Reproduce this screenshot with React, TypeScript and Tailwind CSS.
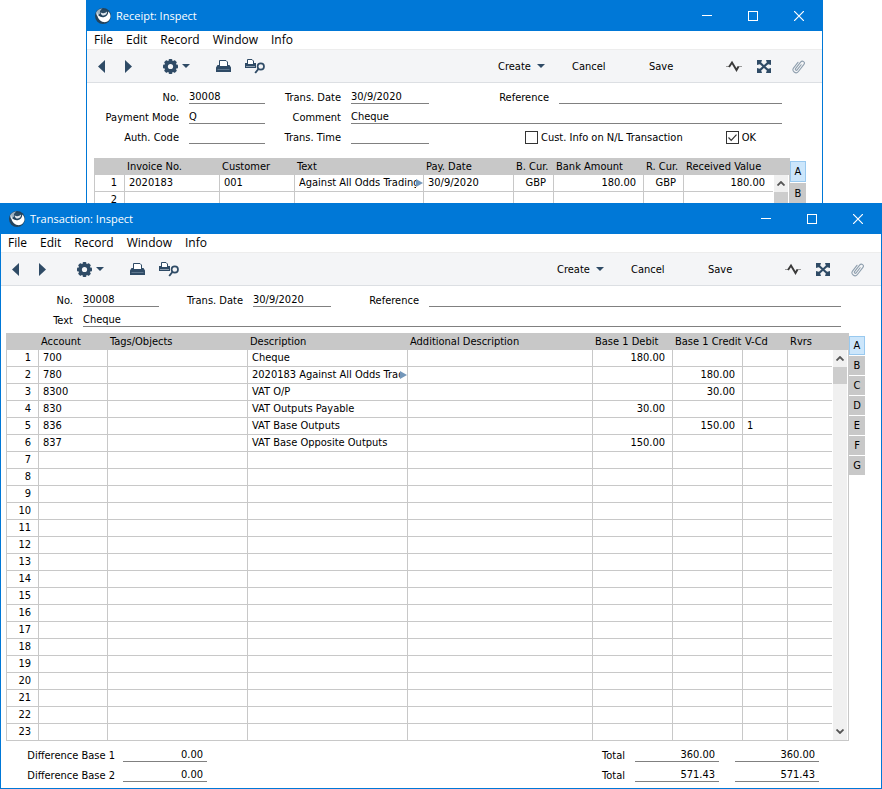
import type { ReactNode } from 'react'
import clsx from 'clsx'

type Column = {
  title: string
  width?: string
  align?: 'right'
}

type Cell = string | { text: string; more: true }

const receiptColumns: Column[] = [
  { title: '', width: 'w-[31px]', align: 'right' },
  { title: 'Invoice No.', width: 'w-[95px]' },
  { title: 'Customer', width: 'w-[75px]' },
  { title: 'Text' },
  { title: 'Pay. Date', width: 'w-[90px]' },
  { title: 'B. Cur.', width: 'w-[40px]', align: 'right' },
  { title: 'Bank Amount', width: 'w-[90px]', align: 'right' },
  { title: 'R. Cur.', width: 'w-[40px]', align: 'right' },
  { title: 'Received Value', width: 'w-[89px]', align: 'right' },
]

const receiptRows: Cell[][] = [
  ['2020183', '001', { text: 'Against All Odds Trading', more: true }, '30/9/2020', 'GBP', '180.00', 'GBP', '180.00'],
]

const transactionColumns: Column[] = [
  { title: '', width: 'w-[33px]', align: 'right' },
  { title: 'Account', width: 'w-[69px]' },
  { title: 'Tags/Objects', width: 'w-[140px]' },
  { title: 'Description', width: 'w-[160px]' },
  { title: 'Additional Description' },
  { title: 'Base 1 Debit', width: 'w-[80px]', align: 'right' },
  { title: 'Base 1 Credit', width: 'w-[70px]', align: 'right' },
  { title: 'V-Cd', width: 'w-[45px]' },
  { title: 'Rvrs', width: 'w-[44px]' },
]

const transactionRows: Cell[][] = [
  ['700', '', 'Cheque', '', '180.00'],
  ['780', '', { text: '2020183 Against All Odds Trad', more: true }, '', '', '180.00'],
  ['8300', '', 'VAT O/P', '', '', '30.00'],
  ['830', '', 'VAT Outputs Payable', '', '30.00'],
  ['836', '', 'VAT Base Outputs', '', '', '150.00', '1'],
  ['837', '', 'VAT Base Opposite Outputs', '', '150.00'],
]

function Logo() {
  return (
    <svg className="h-4 w-4" viewBox="0 0 16 16" aria-hidden="true">
      <circle cx="8" cy="8" r="8" fill="#23435c" />
      <path d="M1 4.500C2.400 1.800 5 .5 7.500.5 5.500 1.800 4.600 3.500 5 5.500L2.500 8C1.300 7 .8 5.800 1 4.500Z" fill="#9fb2c1" />
      <path d="M2 3.800c.2 3.700 3.200 5.900 6.600 5.400 3-.5 4.800-2.700 4.700-5.700 1.500 1.300 2.200 3 2.200 4.700 0 3.600-3.200 6.300-6.800 5.900C4.800 13.600 1.500 9.200 2 3.800Z" fill="#fff" />
      <path d="M5 3.500C6.400 1.600 10 1 12.300 3c.3 2.700-1.300 4.700-3.700 4.900C6.500 8 4.800 6 5 3.500Z" fill="#2b4b64" />
      <path d="M5.600 4.200c1.700 1.500 4.300 1.300 6.500-.6.100 2.200-1.300 3.800-3.300 4-1.700.1-3-1.300-3.200-3.400Z" fill="#dfe7ed" />
    </svg>
  )
}

function Triangle({ dir }: { dir: 'left' | 'right' }) {
  return (
    <svg className="h-[13px] w-[7px] fill-current" viewBox="0 0 7 13" aria-hidden="true">
      {dir === 'left' ? <path d="M7 0v13L0 6.500Z" /> : <path d="M0 0v13l7-6.500Z" />}
    </svg>
  )
}

function Caret() {
  return (
    <svg className="h-1 w-2 fill-current" viewBox="0 0 8 4" aria-hidden="true">
      <path d="M0 0h8L4 4Z" />
    </svg>
  )
}

function Gear() {
  return (
    <svg className="h-[15px] w-[15px]" viewBox="0 0 15 15" aria-hidden="true">
      <g fill="currentColor">
        <rect x="5.600" y="0" width="3.800" height="15" rx="1" />
        <rect x="5.600" y="0" width="3.800" height="15" rx="1" transform="rotate(45 7.500 7.500)" />
        <rect x="5.600" y="0" width="3.800" height="15" rx="1" transform="rotate(90 7.500 7.500)" />
        <rect x="5.600" y="0" width="3.800" height="15" rx="1" transform="rotate(135 7.500 7.500)" />
        <circle cx="7.500" cy="7.500" r="6" />
      </g>
      <circle cx="7.500" cy="7.500" r="2.600" fill="#f4f5f7" />
    </svg>
  )
}

function Printer() {
  return (
    <svg className="h-3 w-[15px]" viewBox="0 0 15 12" aria-hidden="true">
      <path d="M3.500 7V.5h6.500l1.500 1.500v5" fill="#fff" stroke="currentColor" strokeWidth="1" />
      <path d="M1.500 5H3v1h9V5h1.500L15 7.500V12H0V7.500Z" fill="currentColor" />
      <path d="M1.500 9.500h12" stroke="#5f7890" strokeWidth="1" />
    </svg>
  )
}

function PrintPreview() {
  return (
    <svg className="h-[15px] w-5" viewBox="0 0 20 15" aria-hidden="true">
      <path d="M2.500 5V.5h4.500l1.500 1.500v3" fill="#fff" stroke="currentColor" strokeWidth="1" />
      <path d="M0 4h2v1h7V4h2v5H0Z" fill="currentColor" />
      <path d="M1 7.500h9" stroke="#8b9cae" strokeWidth="1" />
      <circle cx="15.800" cy="7.500" r="3.200" fill="none" stroke="currentColor" strokeWidth="1.700" />
      <path d="m13.400 10-3.200 4" stroke="currentColor" strokeWidth="1.900" />
    </svg>
  )
}

function Pulse() {
  return (
    <svg className="h-3 w-4" viewBox="0 0 16 12" fill="none" aria-hidden="true">
      <path d="M0 6.500h4M12 6.500h4" stroke="#9a9a9a" strokeWidth="1" />
      <path d="M3 7 6 2.500l4.500 7.500L12.500 6.500" stroke="#3a3a3a" strokeWidth="1.900" />
    </svg>
  )
}

function Expand() {
  return (
    <svg className="h-[13px] w-[14px]" viewBox="0 0 14 13" aria-hidden="true">
      <path d="M2 2l10 9M12 2 2 11" stroke="currentColor" strokeWidth="2.200" />
      <path d="M0 0h5L4 3 3.500 4 0 5ZM14 0v5l-3.500-1L10 3 9 0ZM0 13V8l3.500 1L4 10l1 3ZM14 13H9l1-3 .5-1L14 8Z" fill="currentColor" />
    </svg>
  )
}

function Clip() {
  return (
    <svg className="h-[15px] w-[13px]" viewBox="0 0 13 15" fill="none" aria-hidden="true">
      <path
        d="M-3-3V4a3 3 0 0 0 6 0V-5a2 2 0 0 0-4 0V3.500a1 1 0 0 0 2 0V-3"
        transform="translate(6.500 7.500) rotate(38)"
        stroke="#8f9fae"
        strokeWidth="1.100"
        strokeLinecap="round"
      />
    </svg>
  )
}

function Window({ title, className, children }: { title: string; className?: string; children: ReactNode }) {
  return (
    <section className={clsx('border border-t-0 border-[#0078d7] bg-white', className)}>
      <header className="flex h-[31px] items-center bg-[#0078d7] pl-2 text-white">
        <Logo />
        <h1 className="ml-[5px] flex-1 font-['Open_Sans',sans-serif] text-[11px]">{title}</h1>
        <button className="flex h-full w-[46px] items-center justify-center" aria-label="Minimize">
          <span className="h-px w-2.5 bg-white" />
        </button>
        <button className="flex h-full w-[46px] items-center justify-center" aria-label="Maximize">
          <span className="h-2.5 w-2.5 border border-white" />
        </button>
        <button className="flex h-full w-[46px] items-center justify-center" aria-label="Close">
          <svg className="h-2.5 w-2.5" viewBox="0 0 10 10" stroke="#fff" strokeWidth="1.200">
            <path d="m0 0 10 10M10 0 0 10" />
          </svg>
        </button>
      </header>

      <nav className="flex h-[18px] items-center gap-[13px] pl-[7px] font-['Open_Sans',sans-serif] text-[12px] leading-[18px]">
        {['File', 'Edit', 'Record', 'Window', 'Info'].map((item) => (
          <button key={item}>{item}</button>
        ))}
      </nav>

      <Toolbar />
      {children}
    </section>
  )
}

function Toolbar() {
  return (
    <div className="flex h-[34px] items-center justify-between border-t border-b border-t-[#ededed] border-b-[#dcdfe3] bg-[#f4f5f7] pr-[17px] pl-[11px] text-[#2f4b66]">
      <div className="flex items-center">
        <button aria-label="Previous"><Triangle dir="left" /></button>
        <button className="ml-5" aria-label="Next"><Triangle dir="right" /></button>
        <button className="ml-[31px] flex items-center gap-1" aria-label="Operations">
          <Gear />
          <Caret />
        </button>
        <button className="ml-[26px]" aria-label="Print"><Printer /></button>
        <button className="ml-3.5" aria-label="Print preview"><PrintPreview /></button>
      </div>
      <div className="flex items-center">
        <button className="flex w-[74px] items-center gap-1.5">
          <span className="text-black">Create</span>
          <Caret />
        </button>
        <button className="w-[77px] text-left text-black">Cancel</button>
        <button className="w-[77px] text-left text-black">Save</button>
        <button aria-label="Activities"><Pulse /></button>
        <button className="ml-[15px]" aria-label="Workflow"><Expand /></button>
        <button className="ml-[21px]" aria-label="Attachments"><Clip /></button>
      </div>
    </div>
  )
}

function Field({ id, label, value = '', labelWidth, width }: {
  id: string
  label: string
  value?: string
  labelWidth: string
  width: string
}) {
  return (
    <>
      <label htmlFor={id} className={clsx('shrink-0 pr-2.5 text-right', labelWidth)}>{label}</label>
      <input id={id} defaultValue={value} className={clsx('h-3.5 min-w-0 border-b border-[#808080] outline-none', width)} />
    </>
  )
}

function Check({ label, checked }: { label: string; checked?: boolean }) {
  return (
    <label className="flex items-center gap-[3px]">
      <span className="grid">
        <input type="checkbox" defaultChecked={checked} className="peer col-start-1 row-start-1 h-[13px] w-[13px] appearance-none border border-[#333]" />
        <svg className="pointer-events-none invisible col-start-1 row-start-1 h-[13px] w-[13px] peer-checked:visible" viewBox="0 0 13 13" fill="none">
          <path d="m2.500 6.500 2.700 2.800 5.300-5.600" stroke="#333" strokeWidth="1.200" />
        </svg>
      </span>
      {label}
    </label>
  )
}

function Row({ children }: { children: ReactNode }) {
  return <div className="flex h-5 items-end pr-10">{children}</div>
}

function Matrix({ columns, rows, count, tabs, tabClass }: {
  columns: Column[]
  rows: Cell[][]
  count: number
  tabs: string[]
  tabClass: string
}) {
  return (
    <div className="flex pr-4">
      <div className="min-w-0 flex-1">
        <table className="w-full table-fixed border-separate border-spacing-0 leading-4">
          <thead>
            <tr className="h-[17px] bg-[#c8c8c8]">
              {columns.map((col, i) => (
                <th key={i} className={clsx('p-0 pl-[2px] text-left font-normal whitespace-nowrap', col.width)}>{col.title}</th>
              ))}
            </tr>
          </thead>
          <tbody>
            {Array.from({ length: count }, (_, r) => (
              <tr key={r} className="h-[17px]">
                {columns.map((col, c) => {
                  const cell = c === 0 ? String(r + 1) : rows[r]?.[c - 1] ?? ''
                  const last = c === columns.length - 1
                  return (
                    <td
                      key={c}
                      className={clsx(
                        'border-b border-[#c8c8c8] p-0 whitespace-nowrap first:border-l',
                        !last && 'border-r',
                        col.align !== 'right' && 'pl-1',
                        col.align === 'right' && (last ? 'pr-2 text-right' : 'pr-[7px] text-right'),
                      )}
                    >
                      {typeof cell === 'string' ? cell : (
                        <div className="flex items-center">
                          <span className="min-w-0 flex-1 overflow-hidden">{cell.text}</span>
                          <svg className="h-2 w-[7px] shrink-0 fill-[#7397ba]" viewBox="0 0 7 8"><path d="M0 0v8l7-4Z" /></svg>
                        </div>
                      )}
                    </td>
                  )
                })}
              </tr>
            ))}
          </tbody>
        </table>
      </div>

      {/* Scrollbar */}
      <div className="flex w-[17px] flex-col">
        <div className="h-[17px] bg-[#c8c8c8]" />
        <div className="flex-1 border-r border-b border-[#c8c8c8] px-px">
          <div className="flex h-full flex-col bg-[#f0f0f0] text-[#555]">
            <button className="flex h-[17px] items-center justify-center" aria-label="Scroll up">
              <svg className="h-[5px] w-2" viewBox="0 0 8 5" fill="none" stroke="currentColor" strokeWidth="1.800"><path d="m.5 4.500 3.500-3.500 3.500 3.500" /></svg>
            </button>
            <div className="h-[17px] bg-[#cdcdcd]" />
            {count > 2 && (
              <button className="mt-auto flex h-[17px] items-center justify-center" aria-label="Scroll down">
                <svg className="h-[5px] w-2" viewBox="0 0 8 5" fill="none" stroke="currentColor" strokeWidth="1.800"><path d="m.5.5 3.500 3.500 3.500-3.500" /></svg>
              </button>
            )}
          </div>
        </div>
      </div>

      <div className="flex w-4 flex-col gap-px pt-[3px]">
        {tabs.map((tab, i) => (
          <button key={tab} className={clsx('text-center', tabClass, i === 0 ? 'border border-[#99c9ef] bg-[#cce6fb]' : 'bg-[#c8c8c8]')}>
            {tab}
          </button>
        ))}
      </div>
    </div>
  )
}

function Amount({ id, value, label }: { id: string; value: string; label?: string }) {
  return (
    <input
      id={id}
      defaultValue={value}
      aria-label={label}
      className="h-3.5 w-[84px] border-b border-[#808080] pr-1 text-right outline-none"
    />
  )
}

export default function App() {
  return (
    <main className="bg-white font-['DejaVu_Sans_Condensed','DejaVu_Sans',sans-serif] text-[11px] leading-[13px] text-black">
      <Window title="Receipt: Inspect" className="mr-[59px] ml-[86px]">
        <form className="pt-px">
          <Row>
            <Field id="r-no" label="No." value="30008" labelWidth="w-[102px]" width="w-[76px]" />
            <Field id="r-date" label="Trans. Date" value="30/9/2020" labelWidth="w-[86px]" width="w-[78px]" />
            <Field id="r-ref" label="Reference" labelWidth="w-[130px]" width="flex-1" />
          </Row>
          <Row>
            <Field id="r-mode" label="Payment Mode" value="Q" labelWidth="w-[102px]" width="w-[76px]" />
            <Field id="r-comment" label="Comment" value="Cheque" labelWidth="w-[86px]" width="flex-1" />
          </Row>
          <Row>
            <Field id="r-auth" label="Auth. Code" labelWidth="w-[102px]" width="w-[76px]" />
            <Field id="r-time" label="Trans. Time" labelWidth="w-[86px]" width="w-[78px]" />
            <div className="flex flex-1 justify-between pr-[26px] pl-24">
              <Check label="Cust. Info on N/L Transaction" />
              <Check label="OK" checked />
            </div>
          </Row>
        </form>
        <div className="mt-3.5 pl-[7px]">
          <Matrix columns={receiptColumns} rows={receiptRows} count={2} tabs={['A', 'B']} tabClass="h-[21px]" />
        </div>
      </Window>

      {/* Sits in front of the receipt window */}
      <Window title="Transaction: Inspect" className="relative -mt-2">
        <form className="pt-px">
          <Row>
            <Field id="t-no" label="No." value="30008" labelWidth="w-[82px]" width="w-[76px]" />
            <Field id="t-date" label="Trans. Date" value="30/9/2020" labelWidth="w-[94px]" width="w-[78px]" />
            <Field id="t-ref" label="Reference" labelWidth="w-[98px]" width="flex-1" />
          </Row>
          <Row>
            <Field id="t-text" label="Text" value="Cheque" labelWidth="w-[82px]" width="flex-1" />
          </Row>
        </form>
        <div className="mt-1.5 pl-[5px]">
          <Matrix
            columns={transactionColumns}
            rows={transactionRows}
            count={23}
            tabs={['A', 'B', 'C', 'D', 'E', 'F', 'G']}
            tabClass="h-[19px]"
          />
        </div>
        <footer className="flex justify-between pt-px pr-[62px] pb-1.5">
          <div>
            {[1, 2].map((n) => (
              <div key={n} className="flex h-5 items-end">
                <label htmlFor={`diff-${n}`} className="w-[122px] pr-2 text-right">Difference Base {n}</label>
                <Amount id={`diff-${n}`} value="0.00" />
              </div>
            ))}
          </div>
          <div>
            {['360.00', '571.43'].map((total, i) => (
              <div key={total} className="flex h-5 items-end">
                <label htmlFor={`debit-${i}`} className="pr-2.5">Total</label>
                <Amount id={`debit-${i}`} value={total} />
                <span className="w-4" />
                <Amount id={`credit-${i}`} value={total} label={`Total credit base ${i + 1}`} />
              </div>
            ))}
          </div>
        </footer>
      </Window>
    </main>
  )
}
